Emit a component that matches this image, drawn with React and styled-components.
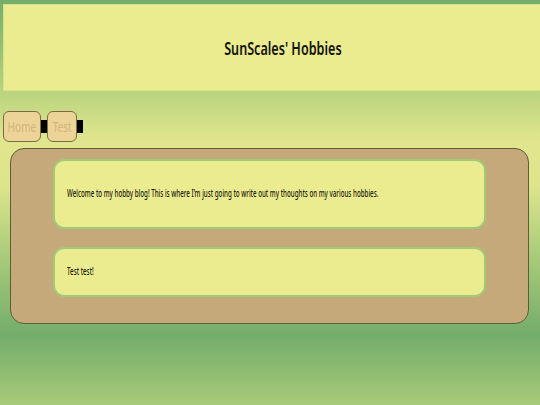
import React from "react";
import styled, { createGlobalStyle } from "styled-components";

const Global = createGlobalStyle`
  html, body { margin: 0; padding: 0; }
  body {
    min-height: 405px;
    overflow: hidden;
    font-family: "Noto Sans", "DejaVu Sans", sans-serif;
    background: linear-gradient(
      to bottom,
      #73ad6a 0px,
      #bcd57f 95px,
      #e0e68d 140px,
      #dde58b 185px,
      #a6ca79 260px,
      #73ad6a 335px,
      #a7ca79 405px
    );
  }
`;

/* the original face is a narrow humanist sans; squeeze Noto Sans to its width */
const Narrow = styled.span`
  display: inline-block;
  white-space: nowrap;
  transform: scaleX(${(p) => p.$k || 0.7});
  transform-origin: ${(p) => p.$origin || "center"};
`;

const Page = styled.div`
  display: flex;
  flex-direction: column;
  padding: 4px 0 0 3px;
`;

const Header = styled.header`
  height: 85px;
  margin-right: -23px;
  background: #ebeb90;
  border: 1px solid #d7e18a;
  display: flex;
  align-items: center;
  justify-content: center;
`;

const Title = styled.h1`
  margin: 0;
  font-size: 18px;
  font-weight: 600;
  color: #151510;
`;

const Nav = styled.nav`
  display: flex;
  align-items: center;
  margin-top: 20px;
`;

const NavItem = styled.div`
  display: flex;
  align-items: center;
  &::after {
    content: "";
    width: 6px;
    height: 13px;
    background: #000;
  }
`;

const NavButton = styled.a`
  box-sizing: border-box;
  width: ${(p) => p.$w}px;
  height: 31px;
  display: flex;
  align-items: center;
  justify-content: center;
  background: #ecd398;
  border: 1px solid #7d6b45;
  border-radius: 6px;
  color: #d3b679;
  font-size: 14px;
  text-decoration: none;
`;

const Panel = styled.main`
  box-sizing: border-box;
  margin: 6px 0 0 7px;
  width: 519px;
  height: 176px;
  background: #c6a97a;
  border: 1px solid #5f5d36;
  border-radius: 14px;
  padding: 10px 42px 0;
  display: flex;
  flex-direction: column;
  gap: 18px;
`;

const Card = styled.section`
  background: #ebeb90;
  border: 2px solid #9fcb76;
  border-radius: 11px;
  padding: ${(p) => p.$pad}px 12px;
  font-size: 9.8px;
  font-weight: 500;
  line-height: 12px;
  color: #1e1d0a;
  overflow: hidden;
`;

export default function App() {
  return (
    <>
      <Global />
      <Page>
        <Header>
          <Title>
            <Narrow $k={0.7}>SunScales' Hobbies</Narrow>
          </Title>
        </Header>
        <Nav>
          <NavItem>
            <NavButton href="#" $w={38}>
              <Narrow $k={0.72}>Home</Narrow>
            </NavButton>
          </NavItem>
          <NavItem>
            <NavButton href="#" $w={30}>
              <Narrow $k={0.72}>Test</Narrow>
            </NavButton>
          </NavItem>
        </Nav>
        <Panel>
          <Card $pad={27}>
            <Narrow $k={0.635} $origin="left">
              Welcome to my hobby blog! This is where I’m just going to write out my thoughts on my various hobbies.
            </Narrow>
          </Card>
          <Card $pad={17}>
            <Narrow $k={0.635} $origin="left">Test test!</Narrow>
          </Card>
        </Panel>
      </Page>
    </>
  );
}
